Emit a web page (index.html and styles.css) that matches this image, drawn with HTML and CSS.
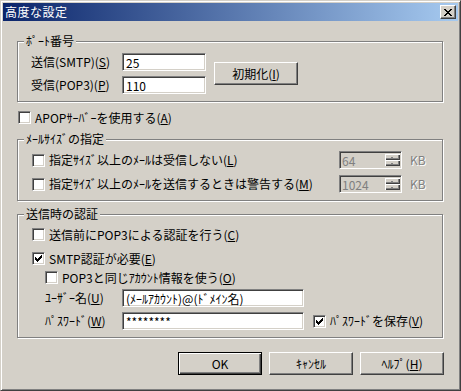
FILE: index.html
```html
<!DOCTYPE html>
<html lang="ja">
<head>
<meta charset="UTF-8" />
<title>高度な設定</title>
<link rel="stylesheet" href="styles.css">
</head>
<body>

  <div class="window" role="dialog" aria-label="高度な設定">
    <div class="titlebar">
      <span class="title">高度な設定</span>
      <button class="close" aria-label="閉じる">
        <svg width="8" height="7" viewBox="0 0 8 7" shape-rendering="crispEdges"><path d="M0 0h2v1h-2z M6 0h2v1h-2z M1 1h2v1h-2z M5 1h2v1h-2z M2 2h4v1h-4z M3 3h2v1h-2z M2 4h4v1h-4z M1 5h2v1h-2z M5 5h2v1h-2z M0 6h2v1h-2z M6 6h2v1h-2z" fill="#000"/></svg>
      </button>
    </div>

    <div class="content">

      <!-- ポート番号 -->
      <div class="group">
        <div class="group-title">ﾎﾟｰﾄ番号</div>
        <div class="group-body port">
          <div class="fields">
            <div class="field">
              <label class="label">送信(SMTP)(<u>S</u>)</label>
              <div class="edit short">25</div>
            </div>
            <div class="field">
              <label class="label">受信(POP3)(<u>P</u>)</label>
              <div class="edit short">110</div>
            </div>
          </div>
          <button class="btn">初期化(<u>I</u>)</button>
        </div>
      </div>

      <div class="check apop">
        <span class="box"></span>
        <span>APOPｻｰﾊﾞｰを使用する(<u>A</u>)</span>
      </div>

      <!-- メールサイズ -->
      <div class="group size-group">
        <div class="group-title">ﾒｰﾙｻｲｽﾞの指定</div>
        <div class="group-body sizes">
          <div class="size-row">
            <div class="check">
              <span class="box"></span>
              <span>指定ｻｲｽﾞ以上のﾒｰﾙは受信しない(<u>L</u>)</span>
            </div>
            <div class="spin">
              <span class="spin-value">64</span>
              <span class="spin-btns"><i></i><i></i></span>
            </div>
            <span class="unit">KB</span>
          </div>
          <div class="size-row">
            <div class="check">
              <span class="box"></span>
              <span>指定ｻｲｽﾞ以上のﾒｰﾙを送信するときは警告する(<u>M</u>)</span>
            </div>
            <div class="spin">
              <span class="spin-value">1024</span>
              <span class="spin-btns"><i></i><i></i></span>
            </div>
            <span class="unit">KB</span>
          </div>
        </div>
      </div>

      <!-- 送信時の認証 -->
      <div class="group auth-group">
        <div class="group-title">送信時の認証</div>
        <div class="group-body auth">
          <div class="check">
            <span class="box"></span>
            <span>送信前にPOP3による認証を行う(<u>C</u>)</span>
          </div>
          <div class="check smtp">
            <span class="box checked">
              <svg width="7" height="7" viewBox="0 0 7 7" shape-rendering="crispEdges"><path d="M6 0h1v1h-1z M5 1h2v1h-2z M0 2h1v1h-1z M4 2h3v1h-3z M0 3h2v1h-2z M3 3h3v1h-3z M0 4h5v1h-5z M1 5h3v1h-3z M2 6h1v1h-1z" fill="#000"/></svg>
            </span>
            <span>SMTP認証が必要(<u>E</u>)</span>
          </div>
          <div class="check indent same">
            <span class="box"></span>
            <span>POP3と同じｱｶｳﾝﾄ情報を使う(<u>O</u>)</span>
          </div>
          <div class="field indent user">
            <label class="label">ﾕｰｻﾞｰ名(<u>U</u>)</label>
            <div class="edit long">(ﾒｰﾙｱｶｳﾝﾄ)@(ﾄﾞﾒｲﾝ名)</div>
          </div>
          <div class="field indent pass">
            <label class="label">ﾊﾟｽﾜｰﾄﾞ(<u>W</u>)</label>
            <div class="edit long">********</div>
            <div class="check save">
              <span class="box checked">
                <svg width="7" height="7" viewBox="0 0 7 7" shape-rendering="crispEdges"><path d="M6 0h1v1h-1z M5 1h2v1h-2z M0 2h1v1h-1z M4 2h3v1h-3z M0 3h2v1h-2z M3 3h3v1h-3z M0 4h5v1h-5z M1 5h3v1h-3z M2 6h1v1h-1z" fill="#000"/></svg>
              </span>
              <span>ﾊﾟｽﾜｰﾄﾞを保存(<u>V</u>)</span>
            </div>
          </div>
        </div>
      </div>

      <div class="actions">
        <button class="btn default">OK</button>
        <button class="btn">ｷｬﾝｾﾙ</button>
        <button class="btn">ﾍﾙﾌﾟ(<u>H</u>)</button>
      </div>

    </div>
  </div>

</body>
</html>
```

FILE: styles.css
```css
/* Classic dialog look */
* {
  box-sizing: border-box;
}

body {
  margin: 0;
  background: #d4d0c8;
  font-family: "Noto Sans CJK JP", "Noto Sans", sans-serif;
  font-size: 12px;
  line-height: 14px;
  color: #000;
}

u {
  text-decoration: underline;
  text-underline-offset: 1px;
}

.window {
  width: 461px;
  height: 391px;
  background: #d4d0c8;
  border: 1px solid;
  border-color: #d4d0c8 #404040 #404040 #d4d0c8;
  box-shadow: inset 1px 1px #fff, inset -1px -1px #808080;
  padding: 2px;
}

.titlebar {
  height: 18px;
  display: flex;
  align-items: center;
  justify-content: space-between;
  padding: 0 2px 0 2px;
  background: linear-gradient(to right, #0a246a, #a6caf0);
  color: #fff;
}

.title {
  font-size: 12px;
  letter-spacing: 0.5px;
}

.close {
  width: 16px;
  height: 14px;
  padding: 0;
  border: 1px solid;
  border-color: #fff #404040 #404040 #fff;
  box-shadow: inset -1px -1px #808080;
  background: #d4d0c8;
  display: flex;
  align-items: center;
  justify-content: center;
}

.close svg {
  display: block;
  margin: 0 0 0 0;
}

.content {
  padding: 20px 0 0 14px;
}

/* Group boxes */
.group {
  width: 426px;
  border: 1px solid #808080;
  box-shadow: inset 1px 1px #fff, 1px 1px #fff;
}

.group-title {
  width: fit-content;
  margin: -8px 0 0 6px;
  padding: 0 2px;
  background: #d4d0c8;
  white-space: nowrap;
}

.group-body {
  padding: 5px 0 7px 14px;
}

.size-group {
  margin-top: 15px;
}

.auth-group {
  margin-top: 13px;
}

/* Port numbers */
.port {
  display: flex;
  align-items: center;
  gap: 8px;
  padding-left: 13px;
}

.fields {
  display: flex;
  flex-direction: column;
  gap: 5px;
}

.field {
  display: flex;
  align-items: center;
  height: 18px;
}

.label {
  width: 91px;
  white-space: nowrap;
}

.edit {
  height: 18px;
  padding: 2px 0 0 3px;
  background: #fff;
  border: 1px solid;
  border-color: #808080 #fff #fff #808080;
  box-shadow: inset 1px 1px #404040, inset -1px -1px #d4d0c8;
  white-space: nowrap;
  overflow: hidden;
  line-height: 13px;
}

.short {
  width: 84px;
}

.long {
  width: 182px;
}

/* Buttons */
.btn {
  width: 84px;
  height: 23px;
  padding: 0;
  font: inherit;
  color: #000;
  background: #d4d0c8;
  border: 1px solid;
  border-color: #fff #404040 #404040 #fff;
  box-shadow: inset -1px -1px #808080;
}

.btn.default {
  border-color: #000;
  box-shadow: inset 1px 1px #fff, inset -1px -1px #404040, inset -2px -2px #808080;
}

/* Check boxes */
.check {
  display: flex;
  align-items: center;
  gap: 4px;
  height: 13px;
  white-space: nowrap;
}

.box {
  flex: none;
  width: 13px;
  height: 13px;
  background: #fff;
  border: 1px solid;
  border-color: #808080 #fff #fff #808080;
  box-shadow: inset 1px 1px #404040, inset -1px -1px #d4d0c8;
}

.box.checked {
  padding: 2px;
}

.box svg {
  display: block;
}

.apop {
  margin: 9px 0 0 1px;
}

/* Size limits */
.sizes {
  display: flex;
  flex-direction: column;
  gap: 6px;
}

.size-row {
  display: grid;
  grid-template-columns: 307px 63px auto;
  align-items: center;
  height: 18px;
}

.spin {
  display: flex;
  height: 18px;
  padding: 2px 1px 2px 2px;
  background: #d4d0c8;
  border: 1px solid;
  border-color: #808080 #fff #fff #808080;
  box-shadow: inset 1px 1px #404040, inset -1px -1px #d4d0c8;
  color: #808080;
}

.spin-value {
  flex: 1;
  line-height: 13px;
}

.spin-btns {
  width: 15px;
  display: flex;
  flex-direction: column;
}

.spin-btns i {
  flex: 1;
  position: relative;
  background: #d4d0c8;
  box-shadow: inset 1px 1px #fff, inset -1px -1px #404040, inset -2px -2px #808080;
}

.spin-btns i::after {
  content: "";
  position: absolute;
  left: 6px;
  top: 3px;
  width: 2px;
  height: 1px;
  background: #808080;
}

.unit {
  margin-left: 8px;
  color: #808080;
  text-shadow: 1px 1px #fff;
}

/* Authentication */
.auth {
  padding-top: 7px;
}

.smtp {
  margin-top: 11px;
}

.indent {
  margin-left: 13px;
}

.same {
  margin-top: 6px;
}

.user,
.pass {
  margin-top: 5px;
}

.auth .label {
  width: 77px;
}

.save {
  margin-left: 9px;
}

/* Dialog buttons */
.actions {
  width: 427px;
  margin-top: 14px;
  display: flex;
  justify-content: flex-end;
  gap: 7px;
}
```
